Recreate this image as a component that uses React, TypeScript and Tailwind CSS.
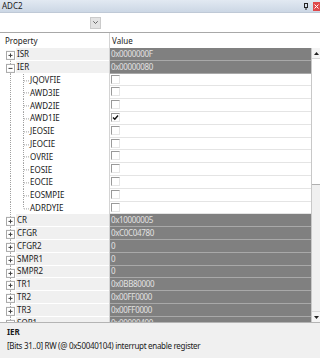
import React from 'react'

type Row = {
  name: string
  value?: string
  child?: boolean
  expanded?: boolean
  checked?: boolean
}

const ROWS: Row[] = [
  { name: 'ISR', value: '0x0000000F' },
  { name: 'IER', value: '0x00000080', expanded: true },
  { name: 'JQOVFIE', child: true },
  { name: 'AWD3IE', child: true },
  { name: 'AWD2IE', child: true },
  { name: 'AWD1IE', child: true, checked: true },
  { name: 'JEOSIE', child: true },
  { name: 'JEOCIE', child: true },
  { name: 'OVRIE', child: true },
  { name: 'EOSIE', child: true },
  { name: 'EOCIE', child: true },
  { name: 'EOSMPIE', child: true },
  { name: 'ADRDYIE', child: true },
  { name: 'CR', value: '0x10000005' },
  { name: 'CFGR', value: '0xC0C04780' },
  { name: 'CFGR2', value: '0' },
  { name: 'SMPR1', value: '0' },
  { name: 'SMPR2', value: '0' },
  { name: 'TR1', value: '0x0BB80000' },
  { name: 'TR2', value: '0x00FF0000' },
  { name: 'TR3', value: '0x00FF0000' },
  { name: 'SQR1', value: '0x00000400' },
]

const H = 12.8

// dotted tree connectors + expander box
function TreeGlyph({ row, index }: { row: Row; index: number }) {
  const mid = H / 2
  const dot = { stroke: '#a0a0a0', strokeWidth: 1, strokeDasharray: '1 1' }
  const lastChild = row.child && ROWS[index + 1] && !ROWS[index + 1].child
  return (
    <svg width={row.child ? 30 : 16} height={H} className="shrink-0">
      {/* trunk */}
      <line x1={10.5} y1={index === 0 ? mid : 0} x2={10.5} y2={H} {...dot} />
      {row.child ? (
        <>
          <line x1={23.5} y1={0} x2={23.5} y2={lastChild ? mid : H} {...dot} />
          <line x1={24} y1={mid + 0.5} x2={30} y2={mid + 0.5} {...dot} />
        </>
      ) : (
        <>
          <line x1={14} y1={mid + 0.5} x2={16} y2={mid + 0.5} {...dot} />
          <rect x={6.5} y={mid - 3} width={8} height={8} fill="#fff" stroke="#a8a8a8" />
          <line x1={8.5} y1={mid + 1} x2={12.5} y2={mid + 1} stroke="#404040" />
          {!row.expanded && <line x1={10.5} y1={mid - 1} x2={10.5} y2={mid + 3} stroke="#404040" />}
        </>
      )}
    </svg>
  )
}

function Checkbox({ checked }: { checked?: boolean }) {
  return (
    <div className="w-[9px] h-[9px] mt-[1px] ml-[1px] bg-white border-t border-l border-[#9a9a9a] border-b border-r border-b-[#e6e6e6] border-r-[#e6e6e6] flex items-center justify-center">
      {checked && (
        <svg width="7" height="7" viewBox="0 0 7 7">
          <path d="M1 3.5 L2.8 5.3 L6 1.5" stroke="#111" strokeWidth="1.4" fill="none" />
        </svg>
      )}
    </div>
  )
}

function GridRow({ row, index }: { row: Row; index: number }) {
  return (
    <div className="flex h-[12.8px] shrink-0">
      <div className="flex w-[110px] shrink-0 border-r border-[#d4d4d4] bg-white">
        <TreeGlyph row={row} index={index} />
        <div
          className={
            row.child
              ? 'flex-1 flex items-center text-[#1a1a1a] leading-none'
              : 'flex-1 flex items-center pl-[1px] bg-[#f0f0f0] border-b border-white text-[#1a1a1a] leading-none'
          }
        >
          {row.name}
        </div>
      </div>
      {row.child ? (
        <div className="flex-1 bg-white border-b border-[#e4e4e4]">
          <Checkbox checked={row.checked} />
        </div>
      ) : (
        <div className="flex-1 flex items-center pl-[1px] bg-[#808080] border-b border-[#a9a9a9] text-[#e2e2e2] leading-none tracking-[-0.35px]">
          {row.value}
        </div>
      )}
    </div>
  )
}

function Scrollbar() {
  return (
    <div className="w-[9px] shrink-0 flex flex-col bg-[#f0f0f0] border-l border-[#c8c8c8]">
      <div className="h-[11px] flex items-center justify-center bg-[#f4f4f4] border-b border-[#d8d8d8]">
        <svg width="5" height="3" viewBox="0 0 5 3">
          <path d="M0 3 L2.5 0 L5 3 Z" fill="#222" />
        </svg>
      </div>
      <div className="h-[126px] bg-white border-b border-[#b0b0b0]" />
      <div className="flex-1" />
      <div className="h-[11px] flex items-center justify-center bg-[#f4f4f4] border-t border-[#d8d8d8]">
        <svg width="5" height="3" viewBox="0 0 5 3">
          <path d="M0 0 L2.5 3 L5 0 Z" fill="#222" />
        </svg>
      </div>
    </div>
  )
}

export default function App() {
  return (
    <div className="w-[320px] h-[358px] flex flex-col overflow-hidden bg-white font-['Noto_Sans',sans-serif] text-[8px]">
      {/* title bar */}
      <div className="h-[13px] shrink-0 flex items-center justify-between pl-[2px] bg-gradient-to-b from-[#e2e9f2] to-[#ccd7e5] border-b border-[#bfc9d6]">
        <span className="text-[#1a1a1a] leading-none">ADC2</span>
        <div className="flex items-center gap-[5px]">
          <svg width="4" height="7" viewBox="0 0 4 7">
            <rect x="0.5" y="0.5" width="3" height="4" fill="none" stroke="#222" />
            <line x1="0" y1="4.5" x2="4" y2="4.5" stroke="#222" />
            <line x1="2" y1="5" x2="2" y2="7" stroke="#222" />
          </svg>
          <div className="w-[7px] h-[9px] bg-[#e0484a] flex items-center justify-center">
            <svg width="5" height="5" viewBox="0 0 5 5">
              <path d="M0.5 0.5 L4.5 4.5 M4.5 0.5 L0.5 4.5" stroke="#fff" strokeWidth="1" />
            </svg>
          </div>
        </div>
      </div>

      {/* toolbar */}
      <div className="h-[20px] shrink-0 flex items-center pl-[90px] bg-white border-b border-[#a8a8a8]">
        <div className="w-[11px] h-[12px] flex items-center justify-center bg-[#e3e3e3] border border-[#cbcbcb]">
          <svg width="5" height="3" viewBox="0 0 5 3">
            <path d="M0.3 0.3 L2.5 2.5 L4.7 0.3" stroke="#555" fill="none" strokeWidth="0.9" />
          </svg>
        </div>
      </div>

      {/* header */}
      <div className="h-[15px] shrink-0 flex bg-white text-[#1a1a1a]">
        <div className="w-[110px] flex items-center pl-[5px] border-r border-[#d4d4d4]">Property</div>
        <div className="flex-1 flex items-center pl-[2px]">Value</div>
      </div>

      {/* grid */}
      <div className="flex-1 min-h-0 flex">
        <div className="flex-1 flex flex-col overflow-hidden">
          {ROWS.map((r, i) => (
            <GridRow key={r.name} row={r} index={i} />
          ))}
        </div>
        <Scrollbar />
      </div>

      {/* description */}
      <div className="h-[36px] shrink-0 flex flex-col pl-[7px] pt-[5px] gap-[6px] bg-[#f0f0f0] border-t border-[#b4b4b4] text-[#1a1a1a] leading-none">
        <span className="font-bold">IER</span>
        <span className="tracking-[-0.3px]">[Bits 31..0] RW (@ 0x50040104) interrupt enable register</span>
      </div>
    </div>
  )
}
